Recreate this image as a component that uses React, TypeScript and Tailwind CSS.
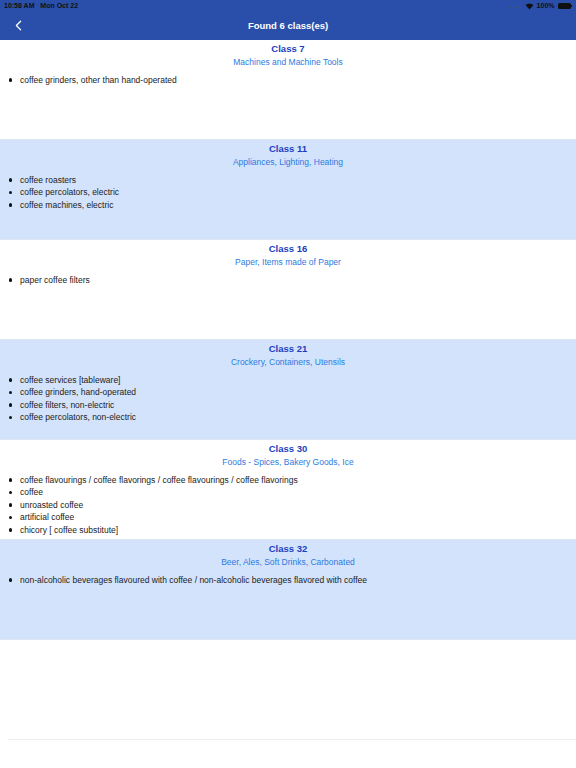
import { ChevronLeft } from 'lucide-react';

interface ClassGroup {
    num: number;
    title: string;
    items: string[];
}

const groups: ClassGroup[] = [
    { num: 7, title: 'Machines and Machine Tools', items: ['coffee grinders, other than hand-operated'] },
    {
        num: 11,
        title: 'Appliances, Lighting, Heating',
        items: ['coffee roasters', 'coffee percolators, electric', 'coffee machines, electric'],
    },
    { num: 16, title: 'Paper, Items made of Paper', items: ['paper coffee filters'] },
    {
        num: 21,
        title: 'Crockery, Containers, Utensils',
        items: [
            'coffee services [tableware]',
            'coffee grinders, hand-operated',
            'coffee filters, non-electric',
            'coffee percolators, non-electric',
        ],
    },
    {
        num: 30,
        title: 'Foods - Spices, Bakery Goods, Ice',
        items: [
            'coffee flavourings / coffee flavorings / coffee flavourings / coffee flavorings',
            'coffee',
            'unroasted coffee',
            'artificial coffee',
            'chicory [ coffee substitute]',
        ],
    },
    {
        num: 32,
        title: 'Beer, Ales, Soft Drinks, Carbonated',
        items: ['non-alcoholic beverages flavoured with coffee / non-alcoholic beverages flavored with coffee'],
    },
];

function StatusBar() {
    return (
        <div className="flex h-[12px] items-center justify-between px-[4px] text-[7px] font-semibold text-[#111]">
            <span>10:58 AM&nbsp;&nbsp;&nbsp;Mon Oct 22</span>
            <div className="flex items-center gap-[3px]">
                <span className="tracking-[1px] text-[#555]">....</span>
                <svg width="9" height="7" viewBox="0 0 18 14">
                    <path d="M9 13 L1 4 A12 12 0 0 1 17 4 Z" fill="#111" />
                </svg>
                <span>100%</span>
                <div className="flex items-center">
                    <div className="h-[6px] w-[13px] rounded-[1.5px] bg-[#111]" />
                    <div className="ml-[0.5px] h-[2.5px] w-[1px] bg-[#111]" />
                </div>
            </div>
        </div>
    );
}

export default function App() {
    return (
        <div className="flex h-[768px] w-[576px] flex-col bg-white font-['Liberation_Sans',Arial,sans-serif]">
            <div className="h-[40px] bg-[#2a4fab]">
                <StatusBar />
                <div className="relative flex h-[28px] items-center justify-center">
                    <ChevronLeft className="absolute left-[10px] top-[5px] text-white" size={17} strokeWidth={1.75} />
                    <span className="text-[9.5px] font-semibold text-white">Found 6 class(es)</span>
                </div>
            </div>

            {groups.map((g, i) => (
                <div
                    key={g.num}
                    className={`h-[100px] border-b border-[#dfe6f2] pt-[3px] ${i % 2 === 1 ? 'bg-[#d3e3fb]' : 'bg-white'}`}
                >
                    <div className="text-center text-[9.5px] font-bold leading-[12px] text-[#1b3fc0]">Class {g.num}</div>
                    <div className="mt-[1px] text-center text-[8.5px] leading-[12px] text-[#2b7be0]">{g.title}</div>
                    <ul className="mt-[5.5px]">
                        {g.items.map((it) => (
                            <li key={it} className="flex items-center text-[8.5px] leading-[12.5px] text-[#222]">
                                <span className="ml-[8.5px] mr-[8px] h-[3.5px] w-[3.5px] rounded-full bg-[#111]" />
                                {it}
                            </li>
                        ))}
                    </ul>
                </div>
            ))}

            <div className="ml-[8px] mt-[99px] border-t border-[#ececec]" />
        </div>
    );
}
